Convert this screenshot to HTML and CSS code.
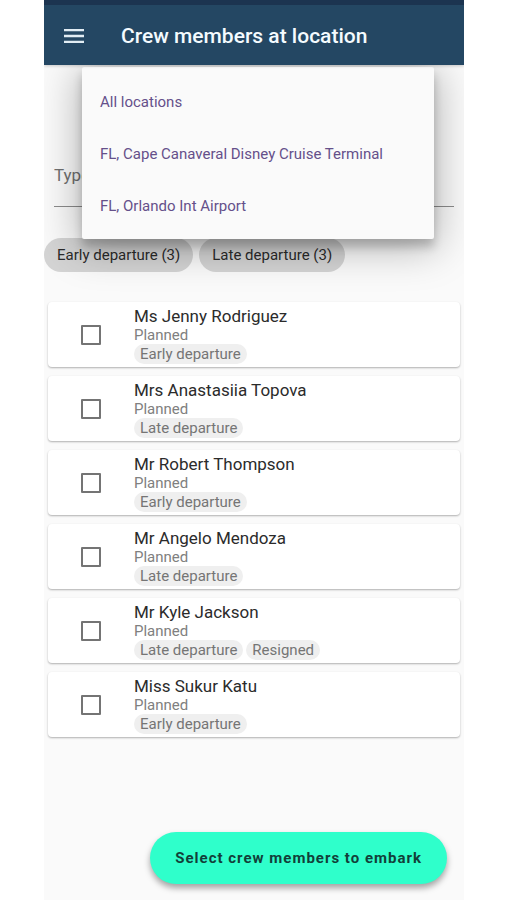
FILE: index.html
```html
<!DOCTYPE html>
<html lang="en">
<head>
<meta charset="utf-8">
<meta name="viewport" content="width=device-width, initial-scale=1">
<title>Crew members at location</title>
<link rel="stylesheet" href="styles.css">
</head>
<body>
<div class="app">
  <header class="app-bar">
    <button class="menu-button" type="button" aria-label="Menu">
      <svg width="20" height="14" viewBox="0 0 20 14" aria-hidden="true"><path d="M0 1.2h20M0 7h20M0 12.8h20" fill="none" stroke="currentColor" stroke-width="2.3"/></svg>
    </button>
    <h1 class="title">Crew members at location</h1>
  </header>

  <main class="content">
    <div class="search">
      <input class="search-input" type="text" placeholder="Type" aria-label="Type">
      <nav class="locations" aria-label="Locations">
        <a class="location" href="#">All locations</a>
        <a class="location" href="#">FL, Cape Canaveral Disney Cruise Terminal</a>
        <a class="location" href="#">FL, Orlando Int Airport</a>
      </nav>
    </div>

    <div class="filters">
      <button class="filter" type="button">Early departure (3)</button>
      <button class="filter" type="button">Late departure (3)</button>
    </div>

    <ul class="crew">
      <li class="card">
        <input class="check" type="checkbox" id="crew-1">
        <div class="member">
          <label class="name" for="crew-1">Ms Jenny Rodriguez</label>
          <span class="status">Planned</span>
          <div class="tags"><span class="tag">Early departure</span></div>
        </div>
      </li>
      <li class="card">
        <input class="check" type="checkbox" id="crew-2">
        <div class="member">
          <label class="name" for="crew-2">Mrs Anastasiia Topova</label>
          <span class="status">Planned</span>
          <div class="tags"><span class="tag">Late departure</span></div>
        </div>
      </li>
      <li class="card">
        <input class="check" type="checkbox" id="crew-3">
        <div class="member">
          <label class="name" for="crew-3">Mr Robert Thompson</label>
          <span class="status">Planned</span>
          <div class="tags"><span class="tag">Early departure</span></div>
        </div>
      </li>
      <li class="card">
        <input class="check" type="checkbox" id="crew-4">
        <div class="member">
          <label class="name" for="crew-4">Mr Angelo Mendoza</label>
          <span class="status">Planned</span>
          <div class="tags"><span class="tag">Late departure</span></div>
        </div>
      </li>
      <li class="card">
        <input class="check" type="checkbox" id="crew-5">
        <div class="member">
          <label class="name" for="crew-5">Mr Kyle Jackson</label>
          <span class="status">Planned</span>
          <div class="tags"><span class="tag">Late departure</span><span class="tag">Resigned</span></div>
        </div>
      </li>
      <li class="card">
        <input class="check" type="checkbox" id="crew-6">
        <div class="member">
          <label class="name" for="crew-6">Miss Sukur Katu</label>
          <span class="status">Planned</span>
          <div class="tags"><span class="tag">Early departure</span></div>
        </div>
      </li>
    </ul>
  </main>

  <footer class="actions">
    <button class="embark" type="button">Select crew members to embark</button>
  </footer>
</div>
</body>
</html>
```
FILE: styles.css
```css
* {
  box-sizing: border-box;
}

body {
  margin: 0;
  padding: 0 43px 0 44px;
  background: #fff;
  color: #2b2b2b;
  font-family: Roboto, "Liberation Sans", sans-serif;
  font-size: 15px;
}

button,
input {
  font: inherit;
}

.app {
  display: flex;
  flex-direction: column;
  min-height: 100vh;
  overflow: hidden;
  background: #fafafa;
}

.app-bar {
  position: relative;
  z-index: 1;
  display: flex;
  align-items: center;
  gap: 37px;
  height: 65px;
  padding: 2px 20px 0;
  border-top: 5px solid #1c3450;
  background: #244763;
  color: #f4fbff;
  box-shadow: 0 1px 3px rgba(0, 0, 0, 0.2);
}

.menu-button {
  display: flex;
  padding: 0;
  border: 0;
  background: none;
  color: #e2edf4;
}

.title {
  margin: 0;
  font-size: 21px;
  font-weight: 500;
  line-height: 28px;
}

.search {
  position: relative;
  padding: 78px 10px 0;
}

.search-input {
  display: block;
  width: 100%;
  height: 64px;
  padding: 0;
  border: 0;
  border-bottom: 1px solid #8c8c8c;
  background: none;
  font-size: 17px;
}

.search-input::placeholder {
  color: #707070;
  opacity: 1;
}

.locations {
  position: absolute;
  top: 2px;
  right: 30px;
  left: 38px;
  padding: 9px 0 7px;
  border-radius: 2px;
  background: #fafafa;
  box-shadow: 0 8px 10px rgba(0, 0, 0, 0.2), 0 6px 40px 4px rgba(0, 0, 0, 0.28);
}

.location {
  display: block;
  padding: 0 18px;
  color: #65508a;
  line-height: 52px;
  text-decoration: none;
}

.filters {
  display: flex;
  gap: 6px;
  padding-top: 31px;
}

.filter {
  height: 34px;
  padding: 0 13px;
  border: 0;
  border-radius: 17px;
  background: #d4d4d4;
  color: #2b2b2b;
}

.crew {
  display: flex;
  flex-direction: column;
  gap: 9px;
  margin: 0;
  padding: 30px 4px;
  list-style: none;
}

.card {
  display: flex;
  align-items: center;
  gap: 33px;
  padding: 4px 33px 3px;
  border-radius: 4px;
  background: #fff;
  box-shadow: 0 1px 2px rgba(0, 0, 0, 0.3);
}

.check {
  appearance: none;
  flex: none;
  width: 20px;
  height: 20px;
  margin: 0;
  border: 2px solid #747474;
  border-radius: 1px;
}

.member {
  display: flex;
  flex-direction: column;
}

.name {
  font-size: 17px;
  line-height: 20px;
}

.status {
  color: #808080;
  line-height: 18px;
}

.tags {
  display: flex;
  gap: 3px;
}

.tag {
  padding: 0 6px;
  border-radius: 10px;
  background: #efefef;
  color: #757575;
  line-height: 20px;
}

.actions {
  display: flex;
  justify-content: flex-end;
  margin-top: auto;
  padding: 0 17px 16px;
}

.embark {
  height: 52px;
  padding: 0 25px;
  border: 0;
  border-radius: 26px;
  background: #2fffcb;
  color: #123f3a;
  font-weight: 700;
  letter-spacing: 1px;
  box-shadow: 0 4px 6px rgba(0, 0, 0, 0.35);
}
```
